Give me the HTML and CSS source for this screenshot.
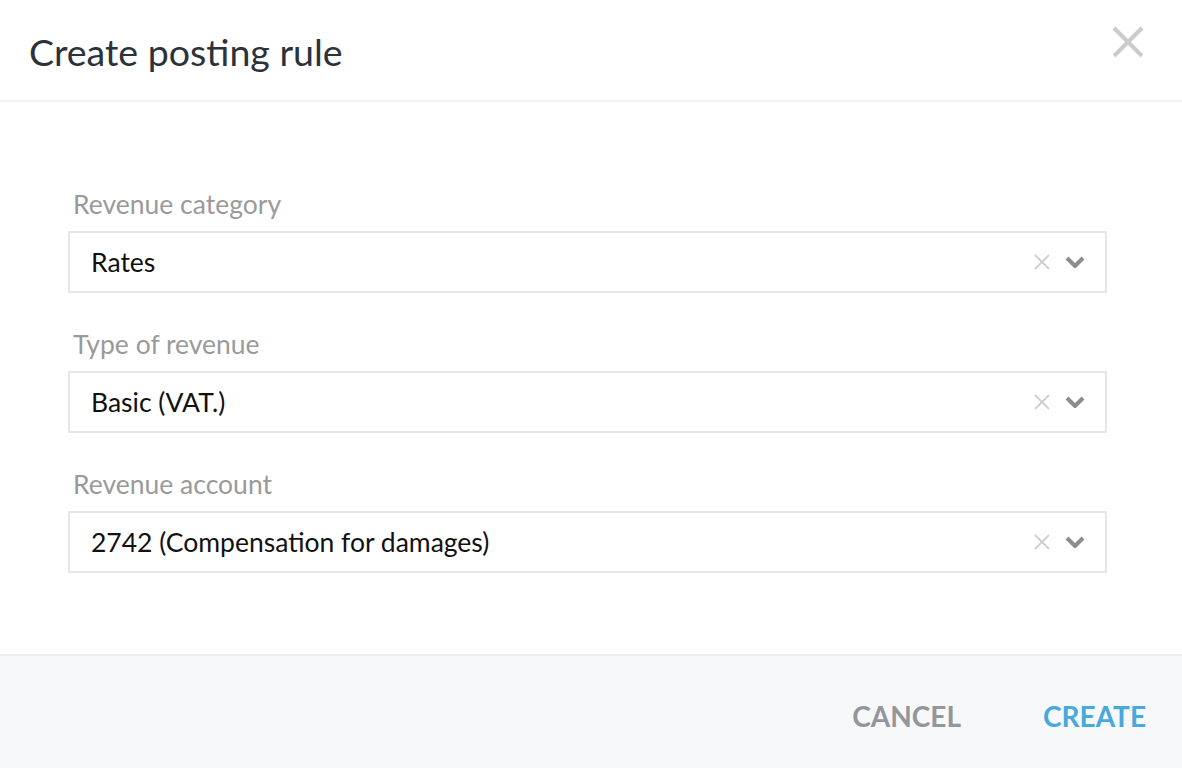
FILE: index.html
```html
<!DOCTYPE html>
<html lang="en">
<head>
<meta charset="utf-8">
<title>Create posting rule</title>
<link rel="stylesheet" href="styles.css">
</head>
<body>
<div class="dialog">
  <header class="dialog-header">
    <h1 class="dialog-title">Create posting rule</h1>
    <button class="close-btn" aria-label="Close">
      <svg width="32" height="32" viewBox="0 0 32 32"><path d="M2 2 L30 30 M30 2 L2 30" stroke="#cbcbcb" stroke-width="4" fill="none"/></svg>
    </button>
  </header>
  <main class="dialog-body">
    <div class="field">
      <label class="field-label">Revenue category</label>
      <div class="select">
        <span class="select-value">Rates</span>
        <span class="select-icons">
          <svg class="icon-clear" width="16" height="16" viewBox="0 0 16 16"><path d="M1 1 L15 15 M15 1 L1 15" stroke="#d0d0d0" stroke-width="2" fill="none"/></svg>
          <svg class="icon-chevron" width="20" height="12" viewBox="0 0 20 12"><path d="M2 2 L10 10 L18 2" stroke="#8b8d91" stroke-width="4" fill="none"/></svg>
        </span>
      </div>
    </div>
    <div class="field">
      <label class="field-label">Type of revenue</label>
      <div class="select">
        <span class="select-value">Basic (VAT.)</span>
        <span class="select-icons">
          <svg class="icon-clear" width="16" height="16" viewBox="0 0 16 16"><path d="M1 1 L15 15 M15 1 L1 15" stroke="#d0d0d0" stroke-width="2" fill="none"/></svg>
          <svg class="icon-chevron" width="20" height="12" viewBox="0 0 20 12"><path d="M2 2 L10 10 L18 2" stroke="#8b8d91" stroke-width="4" fill="none"/></svg>
        </span>
      </div>
    </div>
    <div class="field">
      <label class="field-label">Revenue account</label>
      <div class="select">
        <span class="select-value">2742 (Compensation for damages)</span>
        <span class="select-icons">
          <svg class="icon-clear" width="16" height="16" viewBox="0 0 16 16"><path d="M1 1 L15 15 M15 1 L1 15" stroke="#d0d0d0" stroke-width="2" fill="none"/></svg>
          <svg class="icon-chevron" width="20" height="12" viewBox="0 0 20 12"><path d="M2 2 L10 10 L18 2" stroke="#8b8d91" stroke-width="4" fill="none"/></svg>
        </span>
      </div>
    </div>
  </main>
  <footer class="dialog-footer">
    <button class="btn btn-cancel">CANCEL</button>
    <button class="btn btn-create">CREATE</button>
  </footer>
</div>
</body>
</html>
```

FILE: styles.css
```css
html, body {
  margin: 0;
  padding: 0;
  background: #ffffff;
}
body {
  font-family: Lato, "Open Sans", sans-serif;
}
.dialog {
  width: 1182px;
  height: 768px;
  display: flex;
  flex-direction: column;
  background: #ffffff;
}
.dialog-header {
  height: 100px;
  border-bottom: 2px solid #f1f1f1;
  display: flex;
  align-items: flex-start;
  justify-content: space-between;
  padding: 0 38px 0 29px;
}
.dialog-title {
  margin: 0;
  margin-top: 28px;
  font-size: 37.5px;
  line-height: 48px;
  font-weight: 400;
  color: #2b323c;
}
.close-btn {
  margin-top: 26px;
  background: none;
  border: none;
  padding: 0;
  width: 32px;
  height: 32px;
  cursor: pointer;
}
.close-btn svg {
  display: block;
}
.dialog-body {
  flex: 1;
  padding: 84px 75px 0 68px;
  display: flex;
  flex-direction: column;
  gap: 33px;
}
.field {
  display: flex;
  flex-direction: column;
}
.field-label {
  font-size: 26.5px;
  line-height: 36px;
  color: #9a9a9a;
  padding-left: 5px;
  margin-bottom: 9px;
}
.select {
  height: 58px;
  border: 2px solid #e6e6e6;
  display: flex;
  align-items: center;
  justify-content: space-between;
  padding: 0 20px 0 21px;
}
.select-value {
  font-size: 26.5px;
  color: #111111;
}
.select-icons {
  display: flex;
  align-items: center;
  gap: 15px;
}
.select-icons svg {
  display: block;
}
.dialog-footer {
  height: 112px;
  border-top: 2px solid #eeeff1;
  background: #f7f8fa;
  display: flex;
  align-items: center;
  justify-content: flex-end;
  gap: 82px;
  padding: 0 36px 0 0;
}
.btn {
  background: none;
  border: none;
  padding: 0;
  font-family: Lato, "Open Sans", sans-serif;
  font-size: 28px;
  font-weight: 700;
  letter-spacing: 0;
  cursor: pointer;
  margin-top: 8px;
}
.btn-cancel {
  color: #94969a;
}
.btn-create {
  color: #48a9dc;
}
```
